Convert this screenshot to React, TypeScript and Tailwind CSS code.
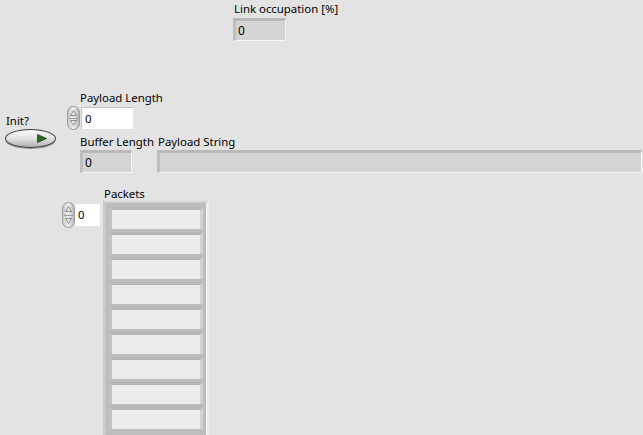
import React from "react";

function Spinner({ h }: { h: number }) {
  return (
    <div
      className="flex w-[13px] flex-col items-center justify-between rounded-full border border-[#9a9a9a] bg-gradient-to-r from-[#c8c8c8] via-[#f2f2f2] to-[#b4b4b4] py-[3px]"
      style={{ height: h }}
    >
      <svg width="7" height="6" viewBox="0 0 7 6">
        <path d="M3.5 0.5 L6.5 5.5 L0.5 5.5 Z" fill="#e8e8e8" stroke="#777" strokeWidth="0.8" />
      </svg>
      <div className="h-px w-[9px] bg-[#9a9a9a]" />
      <svg width="7" height="6" viewBox="0 0 7 6">
        <path d="M0.5 0.5 L6.5 0.5 L3.5 5.5 Z" fill="#e8e8e8" stroke="#777" strokeWidth="0.8" />
      </svg>
    </div>
  );
}

function Indicator({ w, h, value }: { w: number; h: number; value?: string }) {
  return (
    <div
      className="flex items-center border-t-[3px] border-l-[3px] border-r border-b border-t-[#b9b9b9] border-l-[#bebebe] border-r-[#f6f6f6] border-b-[#f6f6f6] bg-[#d4d4d4] pl-[2px] text-[12px] leading-none"
      style={{ width: w, height: h }}
    >
      {value}
    </div>
  );
}

function Cell() {
  return (
    <div className="h-[22px] border-t-[3px] border-l-[3px] border-r-[3px] border-t-[#b7b7b7] border-l-[#c2c2c2] border-r-[#d2d2d2] bg-[#ececec]" />
  );
}

export default function App() {
  return (
    <div
      className="relative h-[435px] w-[643px] overflow-hidden bg-[#e3e3e3] text-[11.4px] text-black"
      style={{ fontFamily: '"Noto Sans", "DejaVu Sans", sans-serif' }}
    >
      {/* Link occupation */}
      <div className="absolute left-[233px] top-[1px] flex flex-col gap-[2px]">
        <span className="pl-px leading-[15px]">Link occupation [%]</span>
        <Indicator w={53} h={23} value="0" />
      </div>

      {/* Init? */}
      <div className="absolute left-[5px] top-[113px] flex flex-col gap-[1px]">
        <span className="pl-px leading-[15px]">Init?</span>
        <div className="relative flex h-[19px] w-[51px] items-center justify-end rounded-[50%] border border-[#3c3c3c] bg-gradient-to-b from-[#fafafa] via-[#e2e2e2] to-[#b0b0b0] pr-[8px] shadow-[0_1px_0_#999]">
          <svg width="10" height="9" viewBox="0 0 10 9">
            <path d="M0.5 0.5 L9.5 4.5 L0.5 8.5 Z" fill="#2c6a1e" stroke="#1d4614" strokeWidth="0.8" />
          </svg>
        </div>
      </div>

      {/* Payload Length */}
      <div className="absolute left-[67px] top-[90px] flex flex-col gap-[1px]">
        <span className="pl-[13px] leading-[15px]">Payload Length</span>
        <div className="flex items-center">
          <Spinner h={24} />
          <div className="ml-px flex h-[22px] w-[52px] items-center border-t border-l border-[#c4c4c4] border-r-[#fafafa] border-b-[#fafafa] bg-white pl-[3px] leading-none">
            0
          </div>
        </div>
      </div>

      {/* Buffer Length */}
      <div className="absolute left-[80px] top-[134px] flex flex-col gap-[1px]">
        <span className="leading-[15px]">Buffer Length</span>
        <Indicator w={52} h={23} value="0" />
      </div>

      {/* Payload String */}
      <div className="absolute left-[157px] top-[134px] flex flex-col gap-[1px]">
        <span className="pl-px leading-[15px]">Payload String</span>
        <Indicator w={485} h={23} />
      </div>

      {/* Packets array */}
      <div className="absolute left-[62px] top-[186px] flex flex-col">
        <span className="pl-[42px] leading-[15px]">Packets</span>
        <div className="flex items-start gap-[3px]">
          <div className="mt-[1px] flex items-center">
            <Spinner h={26} />
            <div className="flex h-[22px] w-[25px] items-center bg-white pl-[3px] leading-none">0</div>
          </div>
          <div className="flex h-[240px] w-[106px] flex-col gap-[3px] border-t-[2px] border-l-[3px] border-r-[3px] border-t-[#d2d2d2] border-l-[#c9c9c9] border-r-[#efefef] bg-[#bdbdbd] px-[3px] pt-[4px]">
            {Array.from({ length: 9 }).map((_, i) => (
              <Cell key={i} />
            ))}
          </div>
        </div>
      </div>
    </div>
  );
}
